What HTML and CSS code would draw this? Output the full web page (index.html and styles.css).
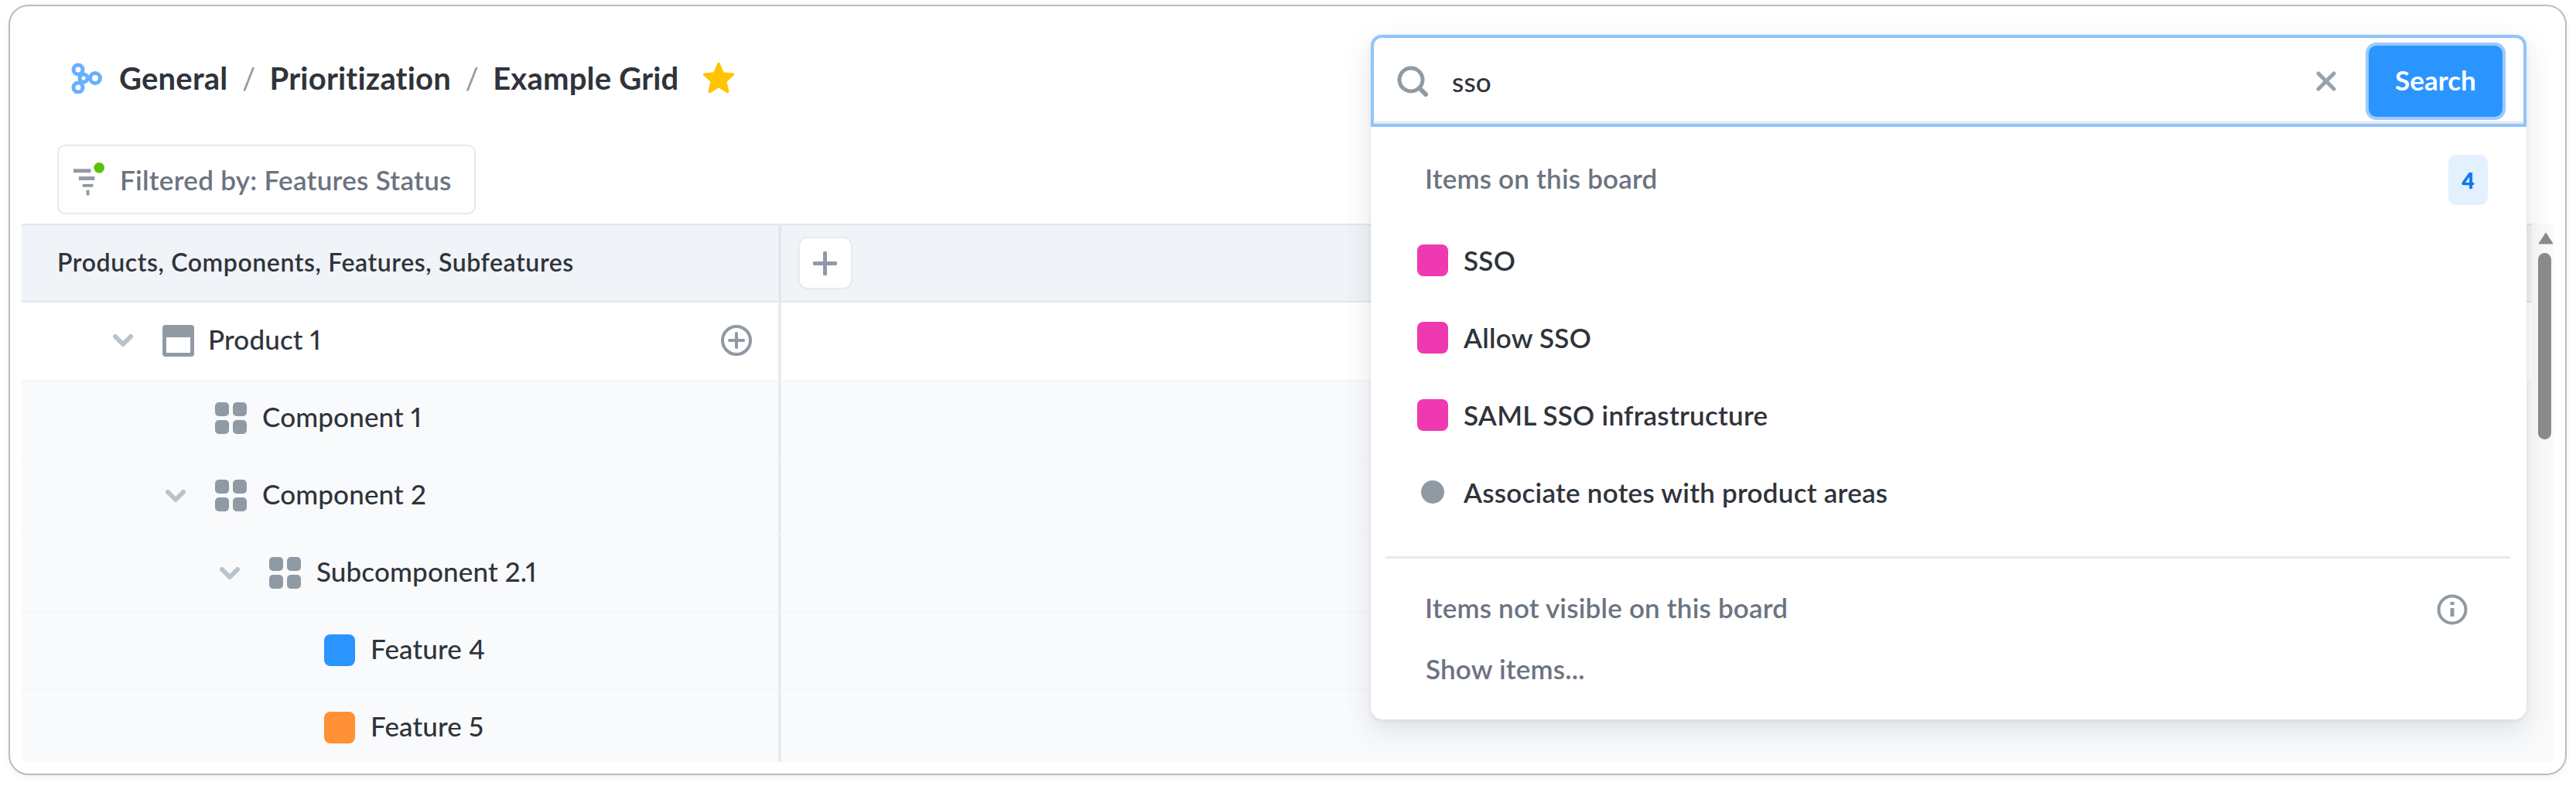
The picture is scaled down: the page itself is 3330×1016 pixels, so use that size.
FILE: index.html
```html
<!DOCTYPE html>
<html lang="en">
<head>
<meta charset="utf-8">
<title>Example Grid</title>
<link rel="stylesheet" href="styles.css">
</head>
<body>
<div class="frame">
  <header class="crumbs">
    <svg class="logo" viewBox="0 0 40 40" fill="none" stroke="#66b0ff" stroke-width="5"><circle cx="9" cy="9" r="6"/><circle cx="9" cy="32" r="6"/><circle cx="31" cy="20" r="6.500"/><circle cx="16" cy="20" r="5"/></svg>
    <span class="crumb">General</span><span class="sep">/</span>
    <span class="crumb">Prioritization</span><span class="sep">/</span>
    <span class="crumb">Example Grid</span>
    <svg class="star" viewBox="0 0 24 24"><path fill="#ffc300" stroke="#ffc300" stroke-width="2" stroke-linejoin="round" d="M12 2l2.900 6.800 7.100.6-5.400 4.800 1.700 7.300-6.300-3.900-6.300 3.900 1.700-7.300L2 9.400l7.100-.6z"/></svg>
  </header>
  <div class="filter-bar">
    <button class="filter-btn">
      <span class="filter-icon">
        <svg viewBox="0 0 42 44"><g fill="#8f9aa5"><rect x="0" y="8" width="23" height="5"/><rect x="7" y="18" width="21" height="5"/><rect x="12" y="28" width="14" height="4"/><rect x="17" y="36" width="4" height="7"/></g><circle cx="34" cy="6.500" r="7" fill="#5cbf0a"/></svg>
      </span>
      Filtered by: Features Status
    </button>
  </div>
  <div class="grid">
    <div class="grid-body">
      <div class="head-row">
        <div class="head-title">Products, Components, Features, Subfeatures</div>
        <div class="head-rest"><button class="add-col"><svg viewBox="0 0 31 31" fill="none" stroke="#8f9aa5" stroke-width="5" stroke-linecap="round"><path d="M15.500 2v27M2 15.500h27"/></svg></button></div>
      </div>
      <div class="row top">
        <div class="cell lvl0">
          <svg class="chev" viewBox="0 0 26 16" fill="none" stroke="#b9c3cd" stroke-width="6" stroke-linecap="round" stroke-linejoin="round"><path d="M3 3l10 10L23 3"/></svg>
          <svg class="ico" viewBox="0 0 41 41"><rect width="41" height="41" rx="4" fill="#8f9aa5"/><rect x="5" y="16" width="31" height="20" fill="#fff"/></svg>
          <span class="label">Product 1</span>
          <svg class="add" viewBox="0 0 42 42" fill="none" stroke="#8f9aa5"><circle cx="21" cy="21" r="18" stroke-width="4"/><path d="M21 12v18M12 21h18" stroke-width="4" stroke-linecap="round"/></svg>
        </div><div class="rest"></div>
      </div>
      <div class="row">
        <div class="cell lvl1">
          <span class="chev-gap"></span>
          <span class="blocks"><i></i><i></i><i></i><i></i></span>
          <span class="label">Component 1</span>
        </div><div class="rest"></div>
      </div>
      <div class="row">
        <div class="cell lvl1">
          <svg class="chev" viewBox="0 0 26 16" fill="none" stroke="#b9c3cd" stroke-width="6" stroke-linecap="round" stroke-linejoin="round"><path d="M3 3l10 10L23 3"/></svg>
          <span class="blocks"><i></i><i></i><i></i><i></i></span>
          <span class="label">Component 2</span>
        </div><div class="rest"></div>
      </div>
      <div class="row">
        <div class="cell lvl2">
          <svg class="chev" viewBox="0 0 26 16" fill="none" stroke="#b9c3cd" stroke-width="6" stroke-linecap="round" stroke-linejoin="round"><path d="M3 3l10 10L23 3"/></svg>
          <span class="blocks"><i></i><i></i><i></i><i></i></span>
          <span class="label">Subcomponent 2.1</span>
        </div><div class="rest"></div>
      </div>
      <div class="row">
        <div class="cell lvl3">
          <span class="chev-gap"></span>
          <span class="swatch blue"></span>
          <span class="label">Feature 4</span>
        </div><div class="rest"></div>
      </div>
      <div class="row">
        <div class="cell lvl3">
          <span class="chev-gap"></span>
          <span class="swatch orange"></span>
          <span class="label">Feature 5</span>
        </div><div class="rest"></div>
      </div>
    </div>
    <div class="scrollbar">
      <svg class="arrow" viewBox="0 0 20 16"><path d="M10 1l9 14H1z" fill="#8c8c8c" stroke="#8c8c8c" stroke-linejoin="round"/></svg>
      <div class="thumb"></div>
    </div>
  </div>

  <div class="popover">
    <div class="search">
      <svg class="search-ico" viewBox="0 0 40 40" fill="none" stroke="#8f9aa5"><circle cx="18" cy="18" r="15" stroke-width="5"/><path d="M29 29l8 8" stroke-width="6" stroke-linecap="round"/></svg>
      <span class="query">sso</span>
      <svg class="clear" viewBox="0 0 26 26" fill="none" stroke="#98a2ab" stroke-width="5" stroke-linecap="round"><path d="M3 3l20 20M23 3L3 23"/></svg>
      <button class="search-btn">Search</button>
    </div>
    <div class="section-head">
      <span class="section-title">Items on this board</span>
      <span class="count">4</span>
    </div>
    <ul class="results">
      <li><span class="swatch pink"></span>SSO</li>
      <li><span class="swatch pink"></span>Allow SSO</li>
      <li><span class="swatch pink"></span>SAML SSO infrastructure</li>
      <li><span class="dot"></span>Associate notes with product areas</li>
    </ul>
    <hr class="divider">
    <div class="section-head second">
      <span class="section-title">Items not visible on this board</span>
      <svg class="info" viewBox="0 0 40 40" fill="none" stroke="#8f9aa5"><circle cx="20" cy="20" r="17.500" stroke-width="4"/><path d="M20 18v11" stroke-width="5"/><path d="M20 10v4" stroke-width="5"/></svg>
    </div>
    <div class="show">Show items...</div>
  </div>
</div>
</body>
</html>
```
FILE: styles.css
```css
* { box-sizing: border-box; }
html, body { margin: 0; padding: 0; background: #fff; }
body {
  height: 1016px;
  overflow: hidden;
  padding: 6px 12px 0 11px;
  font-family: Lato, "Liberation Sans", sans-serif;
  font-variant-numeric: proportional-nums;
  color: #2f343b;
}
.frame {
  position: relative;
  height: 996px;
  border: 2.500px solid #bcbcbc;
  border-radius: 26px;
  background: #fff;
  box-shadow: 0 3px 8px rgba(0, 0, 0, .05);
  padding: 0 15px 15px 15px;
  display: flex;
  flex-direction: column;
}
.crumbs {
  height: 77px;
  margin-top: 54px;
  flex: none;
  display: flex;
  align-items: center;
  padding-left: 64px;
}
.logo { width: 40px; height: 40px; margin-right: 22px; flex: none; }
.crumb { font-size: 40px; font-weight: 700; letter-spacing: .2px; }
.sep { font-size: 38px; color: #8f9aa5; margin: 0 18.500px; font-weight: 400; }
.star { width: 44px; height: 44px; margin-left: 29px; }
.filter-bar { flex: none; height: 150px; padding: 48px 0 0 46px; }
.filter-btn {
  width: 541px;
  height: 90px;
  border: 2px solid #e6eaef;
  border-radius: 10px;
  background: #fff;
  display: flex;
  align-items: center;
  padding: 0 0 0 19px;
  font: 600 35px Lato, "Liberation Sans", sans-serif;
  letter-spacing: .3px;
  color: #6b7480;
}
.filter-icon { width: 41px; height: 44px; margin-right: 19px; display: block; }
.filter-icon svg { display: block; width: 41px; height: 44px; }
.grid { flex: 1; display: flex; min-height: 0; position: relative; }
.grid-body { flex: 1; min-width: 0; overflow: hidden; }
.head-row {
  height: 102px;
  display: flex;
  background: #f0f3f7;
  border-top: 2px solid #e3e7eb;
  border-bottom: 2px solid #e3e7eb;
}
.head-title {
  width: 982px;
  padding: 0 0 4px 46px;
  display: flex;
  align-items: center;
  font-size: 32px;
  letter-spacing: .6px;
  font-weight: 600;
  border-right: 4px solid #e3e7eb;
}
.head-rest { flex: 1; display: flex; align-items: center; padding-left: 22px; }
.add-col {
  width: 70px;
  height: 68px;
  padding: 17px 17px;
  border: 2px solid #e6eaef;
  border-radius: 12px;
  background: #fff;
  display: block;
}
.add-col svg { display: block; width: 31px; height: 31px; }
.row { height: 100px; display: flex; background: #f9fafc; }
.row.top { background: #fff; }
.row + .row { border-top: 1px solid #f4f5f8; }
.cell {
  width: 982px;
  display: flex;
  align-items: center;
  border-right: 4px solid #e8ebef;
  padding-bottom: 2px;
}
.rest { flex: 1; }
.lvl0 { padding-left: 118px; }
.lvl1 { padding-left: 186px; }
.lvl2 { padding-left: 256px; }
.lvl3 { padding-left: 327px; }
.chev { width: 26px; height: 16px; margin-right: 38px; flex: none; }
.chev-gap { width: 64px; flex: none; }
.ico { width: 41px; height: 41px; margin-right: 18px; flex: none; }
.label { font-size: 35px; font-weight: 500; letter-spacing: .15px; padding-bottom: 5px; }
.add { width: 42px; height: 42px; margin-left: auto; margin-right: 33px; }
.blocks {
  width: 41px;
  height: 41px;
  margin-right: 20px;
  flex: none;
  display: grid;
  grid-template-columns: 18px 18px;
  grid-template-rows: 18px 18px;
  gap: 5px;
}
.blocks i { background: #8f9aa5; border-radius: 5px; display: block; }
.swatch { width: 40px; height: 41px; border-radius: 8px; margin-right: 20px; flex: none; display: block; }
.blue { background: #2b95ff; }
.orange { background: #ff9036; }
.pink { background: #ee39b0; }
.scrollbar {
  width: 28px;
  background: #fafafa;
  flex: none;
  padding: 11px 0 0 8px;
}
.arrow { display: block; width: 20px; height: 16px; }
.thumb { width: 17px; height: 241px; margin-top: 11px; background: #8c8c8c; border-radius: 9px; }

.popover {
  position: absolute;
  left: 1759px;
  top: 37px;
  width: 1494px;
  height: 885px;
  background: #fff;
  border-radius: 14px 14px 16px 16px;
  box-shadow: 0 14px 36px rgba(60, 70, 80, .14), 0 2px 6px rgba(60, 70, 80, .08);
}
.search {
  height: 119px;
  border: 4px solid #90c5fb;
  border-radius: 14px 14px 0 0;
  box-shadow: inset 0 -3px 0 #e6eaef;
  display: flex;
  align-items: center;
  padding: 0 27px 0 30px;
}
.search-ico { width: 40px; height: 40px; margin-right: 31px; flex: none; }
.query { font-size: 35px; flex: 1; font-weight: 500; letter-spacing: .2px; }
.clear { width: 26px; height: 26px; margin-right: 42px; flex: none; }
.search-btn {
  width: 173px;
  height: 92px;
  border: 0;
  border-radius: 10px;
  background: #2b95ff;
  box-shadow: 0 0 0 4px #9ccbfb;
  color: #fff;
  font: 700 35px Lato, "Liberation Sans", sans-serif;
  padding: 0 0 4px;
}
.section-head {
  display: flex;
  align-items: center;
  justify-content: space-between;
  height: 65px;
  margin-top: 36px;
  padding: 0 50px 0 70px;
  color: #6b7480;
  font-size: 35px;
  font-weight: 600;
  letter-spacing: .2px;
}
.section-title { padding-bottom: 6px; }
.count {
  width: 51px;
  height: 65px;
  background: #e3f0fe;
  border-radius: 10px;
  color: #0b78ee;
  font-size: 28px;
  font-weight: 800;
  display: flex;
  align-items: center;
  justify-content: center;
}
.results { list-style: none; margin: 21px 0 0; padding: 0; }
.results li {
  height: 100px;
  display: flex;
  align-items: center;
  padding-left: 60px;
  font-size: 35px;
  font-weight: 600;
  letter-spacing: .25px;
}
.dot { width: 30px; height: 30px; margin: 0 25px 0 5px; border-radius: 50%; background: #8f9aa5; flex: none; }
.divider { border: 0; height: 3px; background: #e6eaef; margin: 33px 21px 0 19px; }
.section-head.second { margin-top: 33px; height: 65px; padding-right: 76px; }
.info { width: 40px; height: 40px; }
.show { padding-left: 71px; margin-top: 23px; font-size: 35px; font-weight: 600; letter-spacing: .2px; color: #6b7480; }
```
